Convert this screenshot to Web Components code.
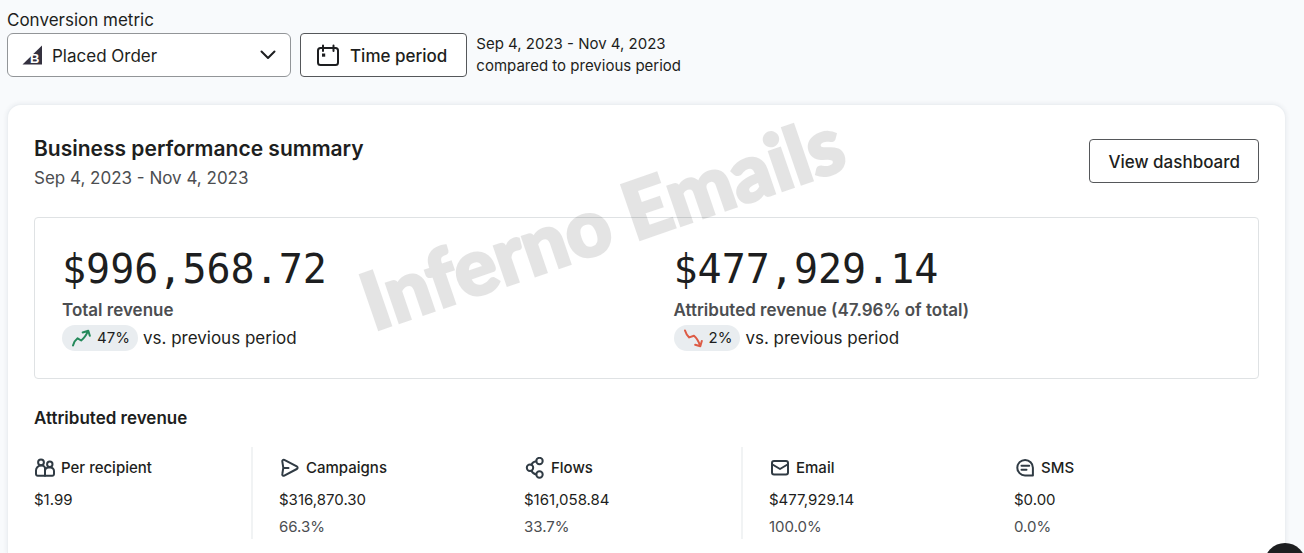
<!DOCTYPE html>
<html lang="en">
<head>
<meta charset="utf-8">
<title>Business performance summary</title>
<style>
  body { margin: 0; background: #f8fafc; color: #1d1e20; font-family: Inter, "Liberation Sans", sans-serif; }
</style>
</head>
<body>
<perf-dashboard></perf-dashboard>

<script>
const ICONS = {
  calendar: [24, '<rect x="2" y="4" width="20" height="17" rx="2.5"/><path d="M7 1.500v5.500M17.500 1.500v5.500"/><path d="M6 9.500h3.200v3.200H6z" fill="currentColor" stroke="none"/>'],
  chevron: [18, '<path d="M2.500 5.500L9 12l6.500-6.500"/>'],
  people: [22, '<circle cx="7" cy="5.300" r="2.900"/><circle cx="15.800" cy="7.300" r="2.700"/><path d="M11 18.700H3.700A1.700 1.700 0 0 1 2 17v-3.400a5 5 0 0 1 5-5h.5A4 4 0 0 1 11 10.500z"/><path d="M11 18.700V14a3.600 3.600 0 0 1 3.600-3.600h1.800A3.600 3.600 0 0 1 20 14v3a1.700 1.700 0 0 1-1.700 1.700z"/>'],
  send: [22, '<path d="M3.300 4.400c-.2-1.300 1-2 2-1.500l12.500 6.500c1.100.6 1.100 2 0 2.600L5.300 18.600c-1.200.5-2.300-.4-2-1.600l1-6.100zM4.500 10.900h5"/>'],
  flows: [22, '<circle cx="15.500" cy="4" r="3.200"/><circle cx="6" cy="10.700" r="3.200"/><circle cx="15.500" cy="17.500" r="3.200"/><path d="M12.300 4.200c-2.400.2-4 1.400-4.900 3.600M12.300 17.400c-2.400-.2-4-1.500-4.900-3.700"/>'],
  mail: [22, '<rect x="3" y="4" width="16" height="13.500" rx="2"/><path d="M3.500 7.500l7.500 4.500 7.500-4.500"/>'],
  sms: [22, '<path d="M18.900 18.500H11a7.800 7.800 0 1 1 7.900-7.800zM7.500 8.700h7.700M7.500 12.700h5"/>'],
  up: [20, '<path d="M2 17.500c.8-3.200 2.200-5.400 4.600-7.200l3.600 2.200c2.600-1.900 4.800-4.900 6.800-9.300M11.700 4.500l5.600-1.800 1.500 5.100"/>'],
  down: [20, '<path d="M2 2.500c.8 2.800 2.200 5 4.200 6.900l4.800-1.600c2.800 2.300 4.600 5.300 6.100 10M12.200 16.800l5.100 1.500 1.500-5.300"/>']
};

function define(name, html, setup) {
  const template = document.createElement('template');
  template.innerHTML = html;
  customElements.define(name, class extends HTMLElement {
    constructor() {
      super();
      this.attachShadow({ mode: 'open' }).append(template.content.cloneNode(true));
    }
    connectedCallback() { if (setup) setup(this, this.shadowRoot); }
  });
}

define('ui-icon', `
<style>
  :host { display: block; flex: none; }
  svg { display: block; fill: none; stroke: currentColor; stroke-width: 2; stroke-linecap: round; stroke-linejoin: round; }
</style>
<svg aria-hidden="true"></svg>`, (el, root) => {
  const [size, shapes] = ICONS[el.getAttribute('name')];
  const svg = root.querySelector('svg');
  svg.setAttribute('viewBox', `0 0 ${size} ${size}`);
  svg.setAttribute('width', size);
  svg.setAttribute('height', size);
  svg.innerHTML = shapes;
});

define('ui-button', `
<style>
  :host { display: block; flex: none; }
  button {
    display: flex; align-items: center; gap: 10px; height: 44px; padding: 1px 18px 0; box-sizing: border-box;
    border: 1px solid #55575a; border-radius: 4px; background: #fff; color: inherit;
    font: 500 17px/24px Inter, "Liberation Sans", sans-serif; white-space: nowrap;
  }
  :host([with-icon]) button { padding: 1px 19px 0 15px; }
</style>
<button type="button"><slot name="icon"></slot><slot></slot></button>`);

define('metric-select', `
<style>
  :host { display: block; width: 284px; }
  label { display: block; font-size: 17px; line-height: 24px; margin-bottom: 1px; }
  .box { position: relative; }
  select {
    display: block; width: 100%; height: 44px; padding: 2px 44px 0 44px; box-sizing: border-box;
    appearance: none; border: 1px solid #929598; border-radius: 6px; background: #fff; color: inherit;
    font: 400 17px/24px Inter, "Liberation Sans", sans-serif;
  }
  .logo { position: absolute; left: 15px; top: 12px; pointer-events: none; }
  ui-icon { position: absolute; right: 14px; top: 13px; pointer-events: none; }
</style>
<label for="metric">Conversion metric</label>
<div class="box">
  <select id="metric"><option>Placed Order</option></select>
  <svg class="logo" width="20" height="20" viewBox="0 0 20 20" aria-hidden="true">
    <path d="M.5 19.500L20 .500v19z" fill="#34313f"/>
    <text x="8" y="17.500" font-family="Liberation Sans, sans-serif" font-weight="700" font-size="13" fill="#fff">B</text>
  </svg>
  <ui-icon name="chevron"></ui-icon>
</div>`);

define('dashboard-toolbar', `
<style>
  :host { display: flex; align-items: flex-end; gap: 9px; }
  p { margin: 0; font-size: 15px; line-height: 22px; }
</style>
<metric-select></metric-select>
<ui-button with-icon><ui-icon slot="icon" name="calendar"></ui-icon>Time period</ui-button>
<p>Sep 4, 2023 - Nov 4, 2023<br>compared to previous period</p>`);

define('trend-badge', `
<style>
  :host { display: flex; align-items: center; gap: 6px; box-sizing: border-box; height: 26px; padding: 0 8px 0 9px; border-radius: 13px; background: #e9edf0; font-size: 15px; line-height: 20px; }
  ui-icon { color: #23895a; }
  ui-icon[name="down"] { color: #dd5b45; }
</style>
<span><slot></slot></span>`, (el, root) => {
  const icon = document.createElement('ui-icon');
  icon.setAttribute('name', el.getAttribute('direction'));
  root.querySelector('span').before(icon);
});

define('revenue-total', `
<style>
  :host { display: block; min-width: 0; padding: 27px; }
  .amount { margin: 0; font: 40px/48px "DejaVu Sans Mono", monospace; }
  .name { margin: 4px 0 2px; font-size: 17px; line-height: 26px; font-weight: 600; color: #4c4e51; }
  .trend { display: flex; align-items: center; gap: 5px; font-size: 17px; line-height: 26px; }
</style>
<p class="amount"><slot name="amount"></slot></p>
<p class="name"><slot name="name"></slot></p>
<div class="trend"><slot name="badge"></slot><span>vs. previous period</span></div>`);

define('channel-metric', `
<style>
  :host { display: block; box-sizing: border-box; height: 92px; padding-top: 10px; margin-right: 26px; font-size: 15px; line-height: 22px; }
  :host([divided]) { border-right: 2px solid #f1f3f4; }
  h4 { display: flex; align-items: center; gap: 5px; margin: 0 0 10px; font: inherit; font-weight: 500; }
  p { margin: 0 0 5px; }
  .share { color: #4c4e51; }
</style>
<h4><slot name="icon"></slot><slot></slot></h4>
<p><slot name="value"></slot></p>
<p class="share"><slot name="share"></slot></p>`);

define('summary-card', `
<style>
  :host {
    display: block; position: relative; flex: 1; box-sizing: border-box; padding: 29px 26px 12px;
    border: 1px solid #eceff2; border-bottom: 0; border-radius: 14px 14px 0 0; background: #fff;
    box-shadow: 0 0 5px rgba(30, 40, 60, .08);
  }
  header { display: flex; align-items: flex-start; justify-content: space-between; }
  h2 { margin: 0; font-size: 21px; line-height: 30px; font-weight: 600; }
  header p { margin: 0; font-size: 17px; line-height: 28px; color: #4c4e51; }
  ui-button { margin-top: 5px; }
  .totals { display: grid; grid-template-columns: 1fr 1fr; margin: 25px 0 26px; border: 1px solid #dfe2e4; border-radius: 4px; }
  h3 { margin: 0 0 16px; font-size: 17px; line-height: 26px; font-weight: 600; }
  .channels { display: grid; grid-template-columns: repeat(5, 1fr); }
  .channels ui-icon { color: #303b44; }
  .watermark {
    position: absolute; left: 342px; top: 69px; font: 900 79px/94px Lato, sans-serif; color: #000;
    -webkit-text-stroke: 3px #000; opacity: .1;
    transform: rotate(-19deg); white-space: nowrap; pointer-events: none;
  }
</style>
<header>
  <div><h2>Business performance summary</h2><p>Sep 4, 2023 - Nov 4, 2023</p></div>
  <ui-button>View dashboard</ui-button>
</header>
<section class="totals">
  <revenue-total>
    <span slot="amount">$996,568.72</span><span slot="name">Total revenue</span>
    <trend-badge slot="badge" direction="up">47%</trend-badge>
  </revenue-total>
  <revenue-total>
    <span slot="amount">$477,929.14</span><span slot="name">Attributed revenue (47.96% of total)</span>
    <trend-badge slot="badge" direction="down">2%</trend-badge>
  </revenue-total>
</section>
<h3>Attributed revenue</h3>
<section class="channels">
  <channel-metric divided><ui-icon slot="icon" name="people"></ui-icon>Per recipient<span slot="value">$1.99</span></channel-metric>
  <channel-metric><ui-icon slot="icon" name="send"></ui-icon>Campaigns<span slot="value">$316,870.30</span><span slot="share">66.3%</span></channel-metric>
  <channel-metric divided><ui-icon slot="icon" name="flows"></ui-icon>Flows<span slot="value">$161,058.84</span><span slot="share">33.7%</span></channel-metric>
  <channel-metric><ui-icon slot="icon" name="mail"></ui-icon>Email<span slot="value">$477,929.14</span><span slot="share">100.0%</span></channel-metric>
  <channel-metric><ui-icon slot="icon" name="sms"></ui-icon>SMS<span slot="value">$0.00</span><span slot="share">0.0%</span></channel-metric>
</section>
<div class="watermark">Inferno Emails</div>`);

define('help-launcher', `
<style>
  :host { display: block; position: fixed; right: -2px; bottom: -32px; }
  button { display: block; width: 42px; height: 42px; padding: 0; border: 0; border-radius: 50%; background: #1d1e20; }
</style>
<button type="button" aria-label="Help"></button>`);

define('perf-dashboard', `
<style>
  :host { display: flex; flex-direction: column; gap: 27px; box-sizing: border-box; min-height: 100vh; padding: 8px 18px 0 7px; overflow: hidden; }
</style>
<dashboard-toolbar></dashboard-toolbar>
<summary-card></summary-card>
<help-launcher></help-launcher>`);
</script>
</body>
</html>
